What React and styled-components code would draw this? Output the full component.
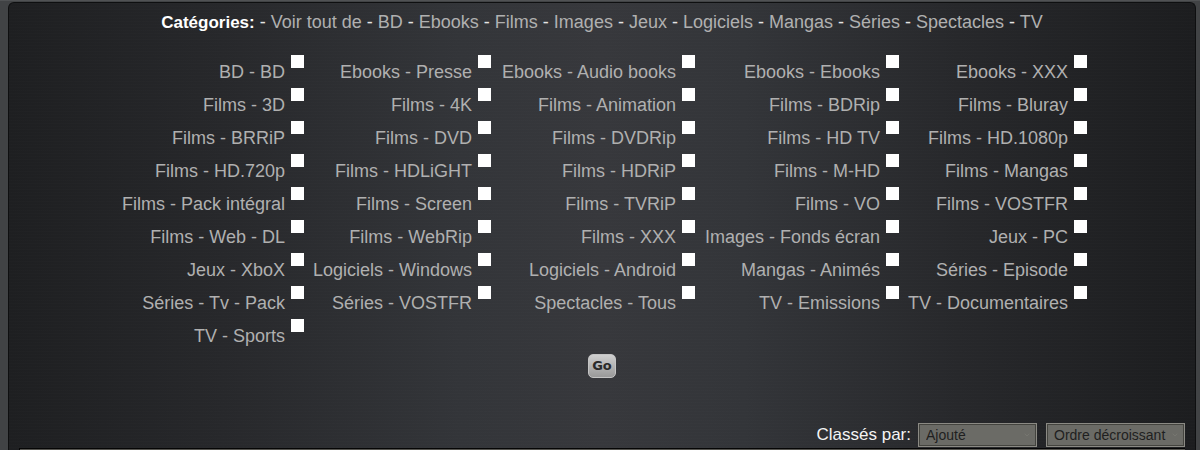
import React from "react";
import styled, { createGlobalStyle } from "styled-components";
import { ChevronDown } from "lucide-react";

const GlobalStyle = createGlobalStyle`
  *, *::before, *::after { box-sizing: border-box; }
  body {
    margin: 0;
    background: #414345;
    font-family: "Liberation Sans", Arial, sans-serif;
    font-size: 18px;
    color: #b0b0b0;
  }
`;

const Page = styled.div`
  padding: 1px 4px 0 8px;
  border-top: 1px solid #505254;
`;

const Panel = styled.main`
  min-height: calc(100vh - 2px);
  padding: 8px 10px 0;
  display: flex;
  flex-direction: column;
  border: 1px solid #0e0f10;
  border-bottom: 0;
  border-radius: 6px 6px 0 0;
  background:
    repeating-linear-gradient(to bottom, rgba(255, 255, 255, 0.006) 0 1px, transparent 1px 3px),
    linear-gradient(to right, #1e1f21 0%, #27282b 18%, #333539 38%, #37383c 50%, #333539 62%, #27282b 80%, #1c1d1f 100%);
`;

const CategoryNav = styled.nav`
  line-height: 22px;
  text-align: center;
  color: #e4e4e4;
`;

const Heading = styled.strong`
  font-size: 17px;
  line-height: 1;
  color: #fff;
`;

const NavLink = styled.a`
  color: #b0b0b0;
  text-decoration: none;
`;

const SearchForm = styled.form`
  display: flex;
  flex-direction: column;
  align-items: center;
  margin-top: 21px;
`;

const Filters = styled.div`
  display: grid;
  grid-template-columns: 187px 187px 204px 204px 188px;
  grid-auto-rows: 33px;
`;

const Filter = styled.label`
  display: flex;
  justify-content: flex-end;
  align-items: flex-start;
  gap: 6px;
  white-space: nowrap;
`;

const FilterName = styled.span`
  padding-top: 7px;
  line-height: 22px;
`;

const Checkbox = styled.input`
  appearance: none;
  width: 13px;
  height: 13px;
  margin: 1px 0 0;
  background: #fff;
  &:checked { background: #6d8fb3; }
`;

const GoButton = styled.button`
  width: 28px;
  height: 24px;
  margin-top: 3px;
  padding: 0;
  border: 1px solid #c4c4c4;
  border-radius: 5px;
  background: linear-gradient(#cfcfcf, #999);
  color: #2a2a2a;
  font: bold 13px/20px "DejaVu Sans", Verdana, sans-serif;
`;

const SortBar = styled.div`
  display: flex;
  justify-content: flex-end;
  align-items: center;
  gap: 9px;
  margin-top: 45px;
  padding-bottom: 1px;
  color: #f4f4f4;
`;

const SortLabel = styled.label`
  margin-right: -2px;
  font-size: 17px;
`;

const SelectBox = styled.div`
  position: relative;
  width: ${({ $width }) => $width};
  height: 24px;

  svg {
    position: absolute;
    top: 8px;
    right: 6px;
    color: #7c7b75;
    pointer-events: none;
  }
`;

const SortSelect = styled.select`
  appearance: none;
  display: block;
  width: 100%;
  height: 100%;
  padding: 0 7px;
  border: 1px solid #8b8a84;
  border-radius: 0;
  outline: 1px solid #44443f;
  outline-offset: -2px;
  background: #6b6b66;
  color: #1f1f1f;
  font: 14px "Liberation Sans", Arial, sans-serif;
`;

const Results = styled.section`
  height: 2px;
  border-top: 1px solid #050505;
  border-left: 1px solid #050505;
  background: #55544f;
`;

const groups = ["Voir tout de", "BD", "Ebooks", "Films", "Images", "Jeux", "Logiciels", "Mangas", "Séries", "Spectacles", "TV"];

const filters = [
  "BD - BD", "Ebooks - Presse", "Ebooks - Audio books", "Ebooks - Ebooks", "Ebooks - XXX",
  "Films - 3D", "Films - 4K", "Films - Animation", "Films - BDRip", "Films - Bluray",
  "Films - BRRiP", "Films - DVD", "Films - DVDRip", "Films - HD TV", "Films - HD.1080p",
  "Films - HD.720p", "Films - HDLiGHT", "Films - HDRiP", "Films - M-HD", "Films - Mangas",
  "Films - Pack intégral", "Films - Screen", "Films - TVRiP", "Films - VO", "Films - VOSTFR",
  "Films - Web - DL", "Films - WebRip", "Films - XXX", "Images - Fonds écran", "Jeux - PC",
  "Jeux - XboX", "Logiciels - Windows", "Logiciels - Android", "Mangas - Animés", "Séries - Episode",
  "Séries - Tv - Pack", "Séries - VOSTFR", "Spectacles - Tous", "TV - Emissions", "TV - Documentaires",
  "TV - Sports",
];

export default function App() {
  return (
    <>
      <GlobalStyle />
      <Page>
        <Panel>
          <CategoryNav>
            <Heading>Catégories:</Heading>
            {groups.map((name) => (
              <React.Fragment key={name}>
                {" - "}
                <NavLink href="#">{name}</NavLink>
              </React.Fragment>
            ))}
          </CategoryNav>
          <SearchForm onSubmit={(e) => e.preventDefault()}>
            <Filters>
              {filters.map((name) => (
                <Filter key={name}>
                  <FilterName>{name}</FilterName>
                  <Checkbox type="checkbox" name="category" value={name} />
                </Filter>
              ))}
            </Filters>
            <GoButton type="submit">Go</GoButton>
          </SearchForm>
          <SortBar>
            <SortLabel htmlFor="sort">Classés par:</SortLabel>
            <SelectBox $width="119px">
              <SortSelect id="sort">
                <option>Ajouté</option>
              </SortSelect>
              <ChevronDown size={8} />
            </SelectBox>
            <SelectBox $width="139px">
              <SortSelect aria-label="Ordre">
                <option>Ordre décroissant</option>
              </SortSelect>
              <ChevronDown size={8} />
            </SelectBox>
          </SortBar>
          <Results />
        </Panel>
      </Page>
    </>
  );
}
